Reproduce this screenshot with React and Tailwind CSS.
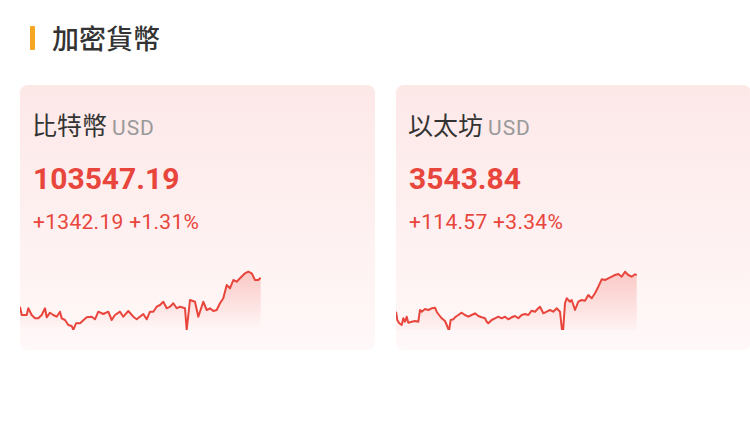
import React from "react";

const btcRaw = [
  [60, 200], [65, 225], [80, 225], [85, 205], [95, 225], [105, 235], [115, 235], [125, 225],
  [135, 205], [140, 232], [150, 218], [160, 225], [170, 230], [180, 215], [185, 235], [195, 240],
  [205, 255], [215, 258], [220, 270], [228, 250], [240, 250], [260, 232], [275, 230], [285, 238],
  [295, 215], [310, 222], [325, 215], [335, 240], [345, 225], [360, 215], [370, 230], [385, 213],
  [400, 230], [410, 238], [430, 222], [440, 238], [450, 215], [460, 215], [470, 200], [480, 195],
  [490, 185], [500, 205], [510, 200], [520, 190], [530, 205], [540, 200], [555, 205], [560, 270],
  [570, 180], [585, 185], [595, 230], [610, 185], [620, 210], [630, 205], [640, 213], [650, 210],
  [660, 190], [670, 175], [680, 135], [690, 145], [700, 120], [710, 125], [720, 115], [735, 100],
  [745, 95], [755, 100], [765, 120], [775, 120], [782, 113],
];

const ethRaw = [
  [48, 215], [52, 240], [58, 250], [65, 255], [70, 235], [75, 245], [80, 230], [85, 248], [95, 245],
  [105, 243], [115, 245], [120, 210], [125, 215], [135, 207], [145, 210], [155, 205], [165, 203],
  [170, 215], [175, 222], [185, 235], [195, 243], [200, 255], [207, 272], [212, 240], [220, 238],
  [225, 232], [235, 225], [245, 218], [255, 225], [265, 230], [275, 225], [285, 220], [295, 228],
  [305, 232], [315, 235], [320, 245], [325, 250], [335, 240], [345, 235], [355, 230], [365, 235],
  [375, 230], [385, 238], [395, 232], [405, 228], [415, 235], [425, 225], [435, 222], [445, 225],
  [455, 212], [465, 215], [475, 205], [480, 200], [490, 220], [500, 215], [510, 210], [520, 215],
  [530, 205], [540, 215], [548, 290], [555, 190], [560, 175], [570, 185], [575, 180], [585, 210],
  [595, 185], [605, 180], [615, 182], [625, 165], [635, 175], [645, 160], [655, 140], [665, 118],
  [675, 120], [685, 115], [695, 110], [705, 105], [715, 102], [725, 110], [735, 95], [745, 105],
  [755, 110], [765, 103], [770, 105],
];

const coins = [
  {
    name: "比特幣",
    price: "103547.19",
    change: "+1342.19 +1.31%",
    points: btcRaw.map(([x, y]) => [x / 3 - 20, y / 3 - 20]),
  },
  {
    name: "以太坊",
    price: "3543.84",
    change: "+114.57 +3.34%",
    points: ethRaw.map(([x, y]) => [(x - 48) / 3, y / 3 - 20]),
  },
];

const Sparkline = ({ points, id }) => {
  const line = points.map(([x, y], i) => `${i ? "L" : "M"}${x.toFixed(1)} ${y.toFixed(1)}`).join(" ");
  const last = points[points.length - 1];
  const area = `${line} L${last[0].toFixed(1)} 70 L0 70 Z`;
  return (
    <svg width="241" height="70" viewBox="0 0 241 70" className="block">
      <defs>
        <linearGradient id={id} x1="0" y1="0" x2="0" y2="1">
          <stop offset="0%" stopColor="#ee5a50" stopOpacity="0.28" />
          <stop offset="100%" stopColor="#ee5a50" stopOpacity="0" />
        </linearGradient>
      </defs>
      <path d={area} fill={`url(#${id})`} />
      <path d={line} fill="none" stroke="#e8463d" strokeWidth="2" strokeLinejoin="round" />
    </svg>
  );
};

const App = () => {
  return (
    <div className="w-[750px] h-[427px] bg-white overflow-hidden font-['Noto_Sans_CJK_TC',sans-serif]">
      {/* Section Heading */}
      <div className="flex items-center pl-[30px] pt-[23px]">
        <span className="w-[5px] h-[24px] bg-[#f5a623] rounded-[1px]" />
        <h2 className="ml-[17px] text-[27px] leading-[30px] text-[#333333] font-medium">加密貨幣</h2>
      </div>

      {/* Cards */}
      <div className="flex gap-[21px] pl-[20px] mt-[32px]">
        {coins.map((coin, i) => (
          <div
            key={coin.name}
            className="shrink-0 w-[355px] h-[265px] rounded-[8px] bg-gradient-to-b from-[#fde8e8] to-[#fff8f8] overflow-hidden"
          >
            <div className="pl-[12px] pt-[25px] flex items-baseline h-[53px] leading-[28px]">
              <span className="text-[25px] text-[#333333]">{coin.name}</span>
              <span className="ml-[5px] text-[21px] tracking-[1px] text-[#999999] font-['Roboto',sans-serif]">USD</span>
            </div>
            <div className="pl-[13px] mt-[23px] text-[30px] leading-[36px] font-bold text-[#e8453c] font-['Roboto',sans-serif]">
              {coin.price}
            </div>
            <div className="pl-[13px] mt-[13px] text-[21px] leading-[24px] tracking-[0.3px] text-[#e8453c] font-['Roboto',sans-serif]">
              {coin.change}
            </div>
            <div className="mt-[26px]">
              <Sparkline points={coin.points} id={`spark-${i}`} />
            </div>
          </div>
        ))}
      </div>
    </div>
  );
};

export default App;
